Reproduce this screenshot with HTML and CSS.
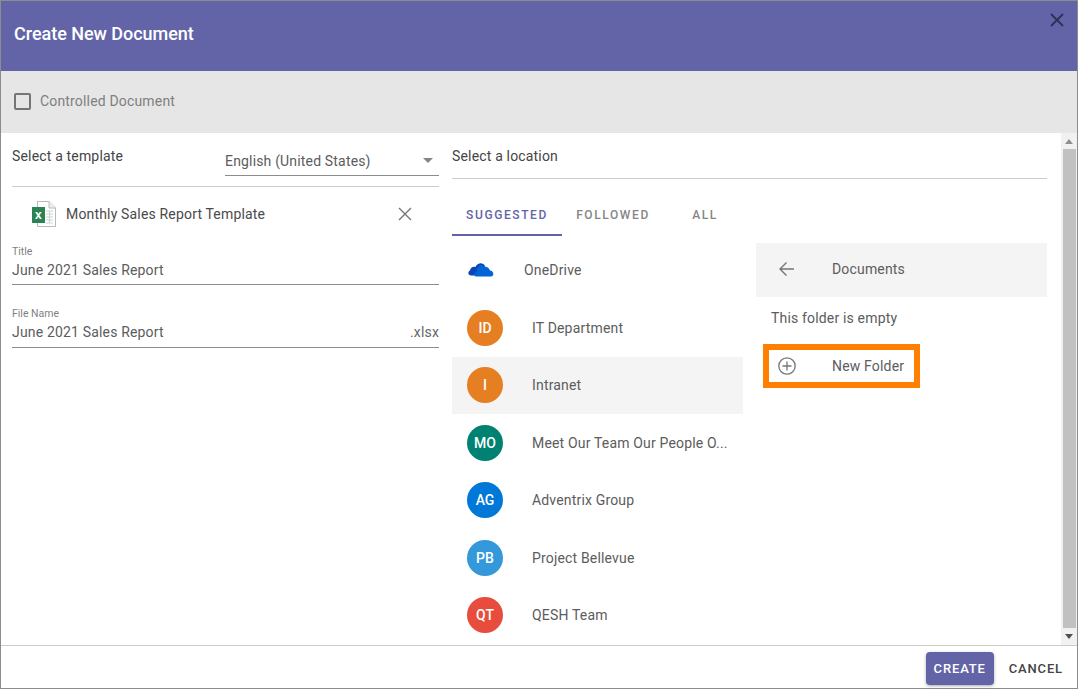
FILE: index.html
```html
<!DOCTYPE html>
<html lang="en">
<head>
    <meta charset="UTF-8">
    <meta name="viewport" content="width=device-width, initial-scale=1.0">
    <title>Create New Document</title>
    <link rel="stylesheet" href="styles.css">
</head>
<body>
    <div class="dialog">
        <header class="dialog-header">
            <h1>Create New Document</h1>
            <button class="close-btn" aria-label="Close">
                <svg width="14" height="14" viewBox="0 0 14 14"><path d="M1 1 L13 13 M13 1 L1 13" stroke="#2f3058" stroke-width="1.9" fill="none"/></svg>
            </button>
        </header>

        <div class="controlled-bar">
            <span class="checkbox"></span>
            <span>Controlled Document</span>
        </div>

        <div class="dialog-body">
            <div class="content">
                <!-- left column: template and names -->
                <section class="template-col">
                    <div class="template-head">
                        <span class="section-title">Select a template</span>
                        <div class="lang-select">
                            <span>English (United States)</span>
                            <span class="caret"></span>
                        </div>
                    </div>
                    <div class="template-item">
                        <svg class="excel-icon" width="26" height="28" viewBox="0 0 26 28">
                            <path d="M6.5 1.5 H18 L24.5 8 V26.5 H6.5 Z" fill="#fff" stroke="#b9b9b9"/>
                            <path d="M18 1.5 V8 H24.5" fill="#eee" stroke="#b9b9b9"/>
                            <path d="M15 11 H22 M15 14 H22 M15 17 H22 M15 20 H22 M15 23 H22 M18.5 11 V23" stroke="#c9d6cd" fill="none"/>
                            <rect x="1" y="7" width="13" height="16" fill="#2a8353"/>
                            <text x="7.5" y="19" class="excel-x">x</text>
                        </svg>
                        <span class="template-name">Monthly Sales Report Template</span>
                        <svg class="remove-icon" width="14" height="14" viewBox="0 0 14 14"><path d="M1 1 L13 13 M13 1 L1 13" stroke="#757575" stroke-width="1.4" fill="none"/></svg>
                    </div>
                    <div class="field">
                        <label>Title</label>
                        <div class="field-value"><span>June 2021 Sales Report</span></div>
                    </div>
                    <div class="field field-file">
                        <label>File Name</label>
                        <div class="field-value"><span>June 2021 Sales Report</span><span class="ext">.xlsx</span></div>
                    </div>
                </section>

                <!-- right column: location picker -->
                <section class="location-col">
                    <div class="location-head section-title">Select a location</div>
                    <div class="tabs">
                        <span class="tab tab-active">SUGGESTED</span>
                        <span class="tab tab-followed">FOLLOWED</span>
                        <span class="tab tab-all">ALL</span>
                    </div>
                    <div class="location-split">
                        <ul class="site-list">
                            <li class="site onedrive">
                                <svg class="cloud" width="28" height="18" viewBox="0 0 28 18">
                                    <path d="M4 15.5 C1 15.5 0.5 11.5 3 10.5 C3.5 7.5 6 6 8.5 7 C10.5 2.5 16 2 18 6 L14 15.5 Z" fill="#0a46b8"/>
                                    <path d="M9 16.5 C6.5 16.5 6.5 12.5 9.5 12 C10 8 13 2 17 6.5 C20 6 22.5 8.5 23 10.5 C27 10.5 27.5 16.5 24 16.5 Z" fill="#0364d8"/>
                                </svg>
                                <span class="site-name">OneDrive</span>
                            </li>
                            <li class="site"><span class="avatar orange">ID</span><span class="site-name">IT Department</span></li>
                            <li class="site selected"><span class="avatar orange">I</span><span class="site-name">Intranet</span></li>
                            <li class="site"><span class="avatar teal">MO</span><span class="site-name">Meet Our Team Our People O...</span></li>
                            <li class="site"><span class="avatar blue">AG</span><span class="site-name">Adventrix Group</span></li>
                            <li class="site"><span class="avatar light-blue">PB</span><span class="site-name">Project Bellevue</span></li>
                            <li class="site"><span class="avatar red">QT</span><span class="site-name">QESH Team</span></li>
                        </ul>
                        <div class="folder-panel">
                            <div class="folder-head">
                                <svg width="18" height="16" viewBox="0 0 18 16"><path d="M16 8 H2 M8.5 1.5 L2 8 L8.5 14.5" stroke="#757575" stroke-width="1.4" fill="none"/></svg>
                                <span>Documents</span>
                            </div>
                            <p class="folder-empty">This folder is empty</p>
                            <div class="new-folder">
                                <svg width="18" height="18" viewBox="0 0 18 18"><circle cx="9" cy="9" r="8.2" stroke="#757575" stroke-width="1.3" fill="none"/><path d="M9 4.5 V13.5 M4.5 9 H13.5" stroke="#757575" stroke-width="1.3"/></svg>
                                <span>New Folder</span>
                            </div>
                        </div>
                    </div>
                </section>
            </div>

            <div class="scrollbar">
                <span class="arrow-up"></span>
                <div class="thumb"></div>
                <span class="arrow-down"></span>
            </div>
        </div>

        <footer class="dialog-footer">
            <button class="btn-create">CREATE</button>
            <button class="btn-cancel">CANCEL</button>
        </footer>
    </div>
</body>
</html>
```

FILE: styles.css
```css
* {
    box-sizing: border-box;
}
html, body {
    margin: 0;
    height: 100%;
}
body {
    font-family: Roboto, "Liberation Sans", sans-serif;
    font-size: 14px;
    letter-spacing: 0.17px;
    color: #5c5c5c;
    background-color: #fff;
    overflow: hidden;
}
.dialog {
    display: flex;
    flex-direction: column;
    width: 1078px;
    height: 689px;
    border: 1px solid #8c8c8c;
}
.dialog-header {
    display: flex;
    align-items: flex-start;
    justify-content: space-between;
    flex: 0 0 70px;
    padding: 0 13px 0 13px;
    background-color: #6264a7;
}
.dialog-header h1 {
    margin: 22px 0 0;
    font-size: 18px;
    line-height: 21px;
    font-weight: 500;
    letter-spacing: -0.03px;
    color: #fff;
}
.close-btn {
    margin-top: 12px;
    padding: 0;
    border: none;
    background: none;
    line-height: 0;
}
.controlled-bar {
    display: flex;
    align-items: center;
    gap: 9px;
    flex: 0 0 62px;
    padding: 0 0 2px 13px;
    background-color: #e6e6e6;
    color: #7f7f7f;
}
.checkbox {
    width: 17px;
    height: 17px;
    border: 2px solid #757575;
    border-radius: 2px;
}
.dialog-body {
    display: flex;
    flex: 1;
    min-height: 0;
}
.content {
    display: flex;
    flex: 1;
    gap: 13px;
    padding-left: 11px;
}
.section-title {
    color: #444;
}

/* left column */
.template-col {
    flex: 0 0 427px;
}
.template-head {
    display: flex;
    justify-content: space-between;
    height: 54px;
    border-bottom: 1px solid #ccc;
}
.template-head .section-title {
    margin-top: 14px;
    line-height: 18px;
}
.lang-select {
    display: flex;
    align-items: center;
    justify-content: space-between;
    width: 214px;
    height: 43px;
    padding: 13px 6px 0 0;
    border-bottom: 1px solid #8c8c8c;
}
.caret {
    border-left: 5px solid transparent;
    border-right: 5px solid transparent;
    border-top: 5px solid #858585;
}
.template-item {
    display: flex;
    align-items: center;
    height: 54px;
    padding-left: 19px;
}
.excel-icon {
    flex: none;
}
.excel-x {
    font-family: "Liberation Sans", sans-serif;
    font-size: 12px;
    font-weight: 700;
    fill: #fff;
    text-anchor: middle;
}
.template-name {
    flex: 1;
    margin-left: 9px;
    color: #4a4a4a;
}
.remove-icon {
    margin-right: 27px;
}
.field {
    margin-top: 5px;
}
.field-file {
    margin-top: 23px;
}
.field label {
    display: block;
    font-size: 10.5px;
    line-height: 12px;
    letter-spacing: 0;
    color: #7f7f7f;
}
.field-value {
    display: flex;
    justify-content: space-between;
    height: 27px;
    padding-top: 3px;
    line-height: 18px;
    border-bottom: 1px solid #8c8c8c;
}
.field-file .field-value {
    height: 28px;
}
.ext {
    color: #666;
}

/* right column */
.location-col {
    flex: 0 0 595px;
}
.location-head {
    height: 46px;
    padding-top: 14px;
    line-height: 18px;
    border-bottom: 1px solid #ccc;
}
.tabs {
    display: flex;
    height: 57px;
    font-size: 12px;
    font-weight: 500;
    letter-spacing: 1.6px;
    color: #858585;
}
.tab {
    display: flex;
    align-items: center;
    justify-content: center;
    height: 57px;
    padding-top: 16px;
    border-bottom: 2px solid transparent;
}
.tab-active {
    width: 110px;
    color: #6264a7;
    border-bottom-color: #6264a7;
}
.tab-followed {
    width: 102px;
}
.tab-all {
    width: 82px;
}
.location-split {
    display: flex;
    gap: 13px;
    margin-top: 7px;
}
.site-list {
    flex: 0 0 291px;
    margin: 0;
    padding: 0;
    list-style: none;
}
.site {
    display: flex;
    align-items: center;
    height: 57.5px;
    padding-left: 15px;
}
.site.selected {
    background-color: #f4f4f4;
}
.site.onedrive {
    height: 56px;
    padding-bottom: 2px;
}
.cloud {
    flex: none;
    margin-top: -3px;
    margin-right: 29px;
}
.avatar {
    display: flex;
    align-items: center;
    justify-content: center;
    flex: none;
    width: 36px;
    height: 36px;
    margin-right: 29px;
    border-radius: 50%;
    font-weight: 500;
    letter-spacing: 0;
    color: #fff;
}
.orange { background-color: #e67e22; }
.teal { background-color: #008272; }
.blue { background-color: #0078d7; }
.light-blue { background-color: #3498db; }
.red { background-color: #e74c3c; }
.folder-panel {
    flex: 0 0 291px;
}
.folder-head {
    display: flex;
    align-items: center;
    gap: 36px;
    height: 54px;
    padding: 0 0 2px 22px;
    background-color: #f4f4f4;
}
.folder-empty {
    margin: 12px 0 0 15px;
    line-height: 18px;
}
.new-folder {
    display: flex;
    align-items: center;
    gap: 36px;
    width: 157px;
    height: 44px;
    margin: 17px 0 0 7px;
    padding-left: 9px;
    border: 6px solid #ff8000;
}

/* scrollbar */
.scrollbar {
    display: flex;
    flex-direction: column;
    align-items: center;
    flex: 0 0 16px;
    background-color: #f1f1f1;
}
.arrow-up {
    flex: none;
    margin: 6px 0 5px;
    border-left: 4px solid transparent;
    border-right: 4px solid transparent;
    border-bottom: 5px solid #8f8f8f;
}
.thumb {
    flex: 1;
    width: 13px;
    background-color: #c1c1c1;
}
.arrow-down {
    flex: none;
    margin: 6px 0;
    border-left: 4px solid transparent;
    border-right: 4px solid transparent;
    border-top: 5px solid #505050;
}

/* footer */
.dialog-footer {
    display: flex;
    align-items: center;
    justify-content: flex-end;
    flex: 0 0 43px;
    padding-right: 14px;
    border-top: 1px solid #ccc;
}
.dialog-footer button {
    font-family: Roboto, "Liberation Sans", sans-serif;
    font-size: 13px;
    font-weight: 500;
    letter-spacing: 0.85px;
    border: none;
}
.btn-create {
    width: 68px;
    height: 33px;
    margin-top: 2px;
    padding: 0;
    border-radius: 4px;
    color: #fff;
    background-color: #6264a7;
    box-shadow: 0 1px 3px rgba(0, 0, 0, 0.35);
}
.btn-cancel {
    margin: 2px 0 0 15px;
    padding: 0;
    color: #444;
    background: none;
}
```
